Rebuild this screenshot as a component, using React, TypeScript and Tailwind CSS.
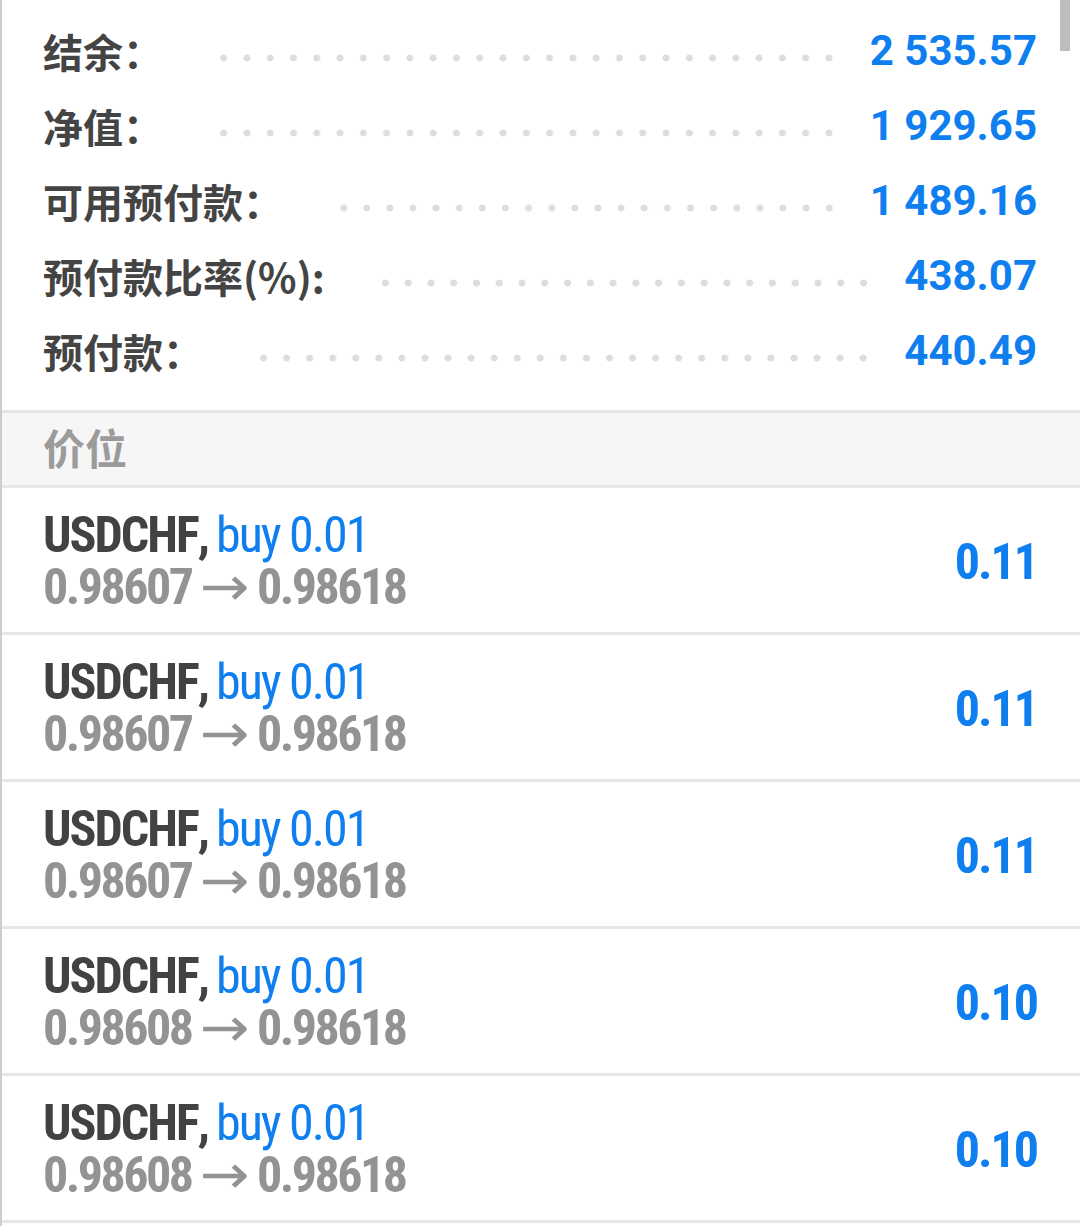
import React from 'react'

const account = [
  { label: '结余：', value: '2 535.57' },
  { label: '净值：', value: '1 929.65' },
  { label: '可用预付款：', value: '1 489.16' },
  { label: '预付款比率(%):', value: '438.07' },
  { label: '预付款：', value: '440.49' },
]

const positions = [
  { from: '0.98607', to: '0.98618', profit: '0.11' },
  { from: '0.98607', to: '0.98618', profit: '0.11' },
  { from: '0.98607', to: '0.98618', profit: '0.11' },
  { from: '0.98608', to: '0.98618', profit: '0.10' },
  { from: '0.98608', to: '0.98618', profit: '0.10' },
]

const cjk = "font-['Noto_Sans_CJK_SC',sans-serif]"
const cond = "font-['Roboto_Condensed','Liberation_Sans_Narrow',Roboto,sans-serif]"

export default function App() {
  return (
    <div className="relative w-[1080px] min-h-[1226px] bg-white border-l-2 border-[#cdcdcd] overflow-hidden">
      {/* scrollbar */}
      <div className="absolute right-[10px] top-0 w-[10px] h-[51px] bg-[#bdbdbd]" />

      <div className="pt-[13px] pb-[22px]">
        {account.map(({ label, value }) => (
          <div key={label} className="flex items-center h-[75px] pl-[41px] pr-[43px]">
            <span className={`${cjk} text-[40px] font-bold text-[#444] leading-none`}>{label}</span>
            <div className="flex-1 ml-[49px] mr-[29px] mt-[14px] h-[8px] bg-[radial-gradient(circle,#dddddd_3.2px,transparent_3.8px)] bg-[length:23.3px_8px] [background-repeat:round_no-repeat]" />
            <span className="font-['Roboto',sans-serif] text-[42px] font-bold text-[#0f7ff0] leading-none">{value}</span>
          </div>
        ))}
      </div>

      <div className="border-y-[3px] border-[#e6e6e6] bg-[#f6f6f6] h-[78px] flex items-center pl-[41px]">
        <span className={`${cjk} text-[42px] font-bold text-[#9b9b9b] leading-none -mt-[4px]`}>价位</span>
      </div>

      {positions.map((p, i) => (
        <div key={i} className={`flex items-center justify-between h-[147px] border-b-[3px] border-[#e6e6e6] pl-[41px] pr-[43px] ${cond}`}>
          <div className="flex flex-col text-[50px] leading-[50px] mt-[4px]">
            <div className="flex items-baseline whitespace-pre">
              <span className="font-bold text-[#424242] tracking-[-2px]">USDCHF</span>
              <span className="font-bold text-[#424242]">,</span>
              <span className="text-[#0f7ff0] tracking-[-2px] ml-[6px]">buy 0.01</span>
            </div>
            <div className="flex items-center text-[#939393]">
              <span className="font-bold tracking-[-2.5px]">{p.from}</span>
              <span className="font-['DejaVu_Sans',sans-serif] text-[54px] leading-none mx-[10px] scale-x-[1.1]">→</span>
              <span className="font-bold tracking-[-2.5px]">{p.to}</span>
            </div>
          </div>
          <span className="text-[50px] font-bold tracking-[-2px] text-[#0f7ff0] leading-none mt-[4px]">{p.profit}</span>
        </div>
      ))}
    </div>
  )
}
